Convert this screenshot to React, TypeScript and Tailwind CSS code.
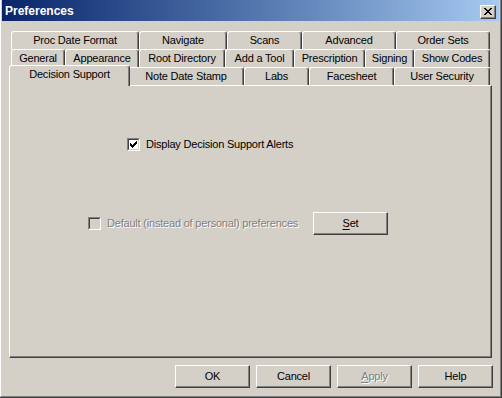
import React from "react";

const row1 = [
  { label: "Proc Date Format", w: "w-[128px]" },
  { label: "Navigate", w: "w-[88px]" },
  { label: "Scans", w: "w-[75px]" },
  { label: "Advanced", w: "w-[94px]" },
  { label: "Order Sets", w: "w-[94px]" },
];

const row2 = [
  { label: "General", w: "w-[54px]" },
  { label: "Appearance", w: "w-[74px]" },
  { label: "Root Directory", w: "w-[86px]" },
  { label: "Add a Tool", w: "w-[69px]" },
  { label: "Prescription", w: "w-[71px]" },
  { label: "Signing", w: "w-[49px]" },
  { label: "Show Codes", w: "w-[76px]" },
];

const row3 = [
  { label: "Note Date Stamp", w: "w-[116px]" },
  { label: "Labs", w: "w-[65px]" },
  { label: "Facesheet", w: "w-[85px]" },
  { label: "User Security", w: "w-[96px]" },
];

function Tab({ label, w }: { label: string; w: string }) {
  return (
    <div
      className={`${w} h-[18px] shrink-0 flex items-center justify-center rounded-t-[3px] border-l border-t border-r border-l-white border-t-white border-r-[#404040] shadow-[inset_-1px_0_0_#808080] bg-[#D4D0C8] text-black`}
    >
      {label}
    </div>
  );
}

function Check({ checked, disabled }: { checked?: boolean; disabled?: boolean }) {
  const px = [
    [6, 0], [5, 1], [6, 1], [0, 2], [4, 2], [5, 2], [6, 2],
    [0, 3], [1, 3], [3, 3], [4, 3], [5, 3], [0, 4], [1, 4], [2, 4], [3, 4], [4, 4],
    [1, 5], [2, 5], [3, 5], [2, 6],
  ];
  return (
    <div className="w-[13px] h-[13px] shrink-0 border-l border-t border-r border-b border-l-[#808080] border-t-[#808080] border-r-white border-b-white">
      <div
        className={`w-full h-full border-l border-t border-r border-b border-l-[#404040] border-t-[#404040] border-r-[#D4D0C8] border-b-[#D4D0C8] flex items-center justify-center ${disabled ? "bg-[#D4D0C8]" : "bg-white"}`}
      >
        {checked && (
          <svg width="7" height="7" viewBox="0 0 7 7" shapeRendering="crispEdges">
            {px.map(([x, y]) => (
              <rect key={`${x}-${y}`} x={x} y={y} width="1" height="1" fill="#000" />
            ))}
          </svg>
        )}
      </div>
    </div>
  );
}

function Button({ children, w = "w-[75px]" }: { children: React.ReactNode; w?: string }) {
  return (
    <div
      className={`${w} h-[23px] shrink-0 border-l border-t border-r border-b border-l-white border-t-white border-r-[#404040] border-b-[#404040] shadow-[inset_-1px_-1px_0_#808080] bg-[#D4D0C8] flex items-center justify-center text-black`}
    >
      {children}
    </div>
  );
}

function CloseGlyph() {
  const px: number[][] = [];
  const rows = ["XX....XX", ".XX..XX.", "..XXXX..", "...XX...", "..XXXX..", ".XX..XX.", "XX....XX"];
  rows.forEach((r, y) => r.split("").forEach((c, x) => c === "X" && px.push([x, y])));
  return (
    <svg width="8" height="7" viewBox="0 0 8 7" shapeRendering="crispEdges">
      {px.map(([x, y]) => (
        <rect key={`${x}-${y}`} x={x} y={y} width="1" height="1" fill="#000" />
      ))}
    </svg>
  );
}

export default function App() {
  return (
    <div className="w-[502px] h-[398px] bg-[#D4D0C8] border-r border-b border-[#404040] font-['Liberation_Sans',Arial,sans-serif] text-[11px] tracking-[-0.2px] leading-none select-none">
      <div className="h-full border-l border-r border-b border-l-white border-r-[#808080] border-b-[#808080] pl-[1px] pr-[1px] flex flex-col">
        {/* title bar */}
        <div className="h-[21px] shrink-0 bg-gradient-to-r from-[#0A246A] to-[#A6CAF0] flex items-center pl-[3px] pr-[3px]">
          <span className="text-white font-bold text-[12px] tracking-normal">Preferences</span>
          <div className="ml-auto w-[16px] h-[14px] mt-[2px] border-l border-t border-r border-b border-l-white border-t-white border-r-[#404040] border-b-[#404040] shadow-[inset_-1px_-1px_0_#808080] bg-[#D4D0C8] flex items-center justify-center">
            <CloseGlyph />
          </div>
        </div>

        <div className="pl-[7px] pr-[7px] pt-[10px]">
          {/* tab rows */}
          <div className="mx-[2px] flex flex-col">
            <div className="flex h-[18px]">
              {row1.map((t) => (
                <Tab key={t.label} {...t} />
              ))}
            </div>
            <div className="flex h-[18px]">
              {row2.map((t) => (
                <Tab key={t.label} {...t} />
              ))}
            </div>
            <div className="flex h-[18px] items-start">
              <div className="relative z-10 w-[121px] h-[21px] -mt-[2px] -ml-[2px] -mr-[2px] shrink-0 rounded-t-[3px] border-l border-t border-r border-l-white border-t-white border-r-[#404040] shadow-[inset_-1px_0_0_#808080] bg-[#D4D0C8] flex items-center justify-center pb-[3px] text-black">
                Decision Support
              </div>
              {row3.map((t) => (
                <Tab key={t.label} {...t} />
              ))}
            </div>
          </div>

          {/* page */}
          <div className="w-[483px] h-[273px] border-l border-t border-r border-b border-l-white border-t-white border-r-[#404040] border-b-[#404040] shadow-[inset_-1px_-1px_0_#808080] flex flex-col">
            <div className="mt-[52px] pl-[117px] flex items-center">
              <Check checked />
              <span className="ml-[6px] text-black">Display Decision Support Alerts</span>
            </div>
            <div className="mt-[61px] pl-[78px] flex items-center h-[23px]">
              <div className="w-[225px] flex items-center">
                <Check disabled />
                <span className="ml-[6px] text-[#808080] [text-shadow:1px_1px_0_#ffffff]">
                  Default (instead of personal) preferences
                </span>
              </div>
              <Button>
                <span>
                  <span className="underline underline-offset-2">S</span>et
                </span>
              </Button>
            </div>
          </div>

          {/* dialog buttons */}
          <div className="mt-[7px] pl-[166px] flex gap-[6px]">
            <Button>OK</Button>
            <Button>Cancel</Button>
            <Button>
              <span className="text-[#808080] [text-shadow:1px_1px_0_#ffffff]">
                <span className="underline underline-offset-2">A</span>pply
              </span>
            </Button>
            <Button>Help</Button>
          </div>
        </div>
      </div>
    </div>
  );
}
